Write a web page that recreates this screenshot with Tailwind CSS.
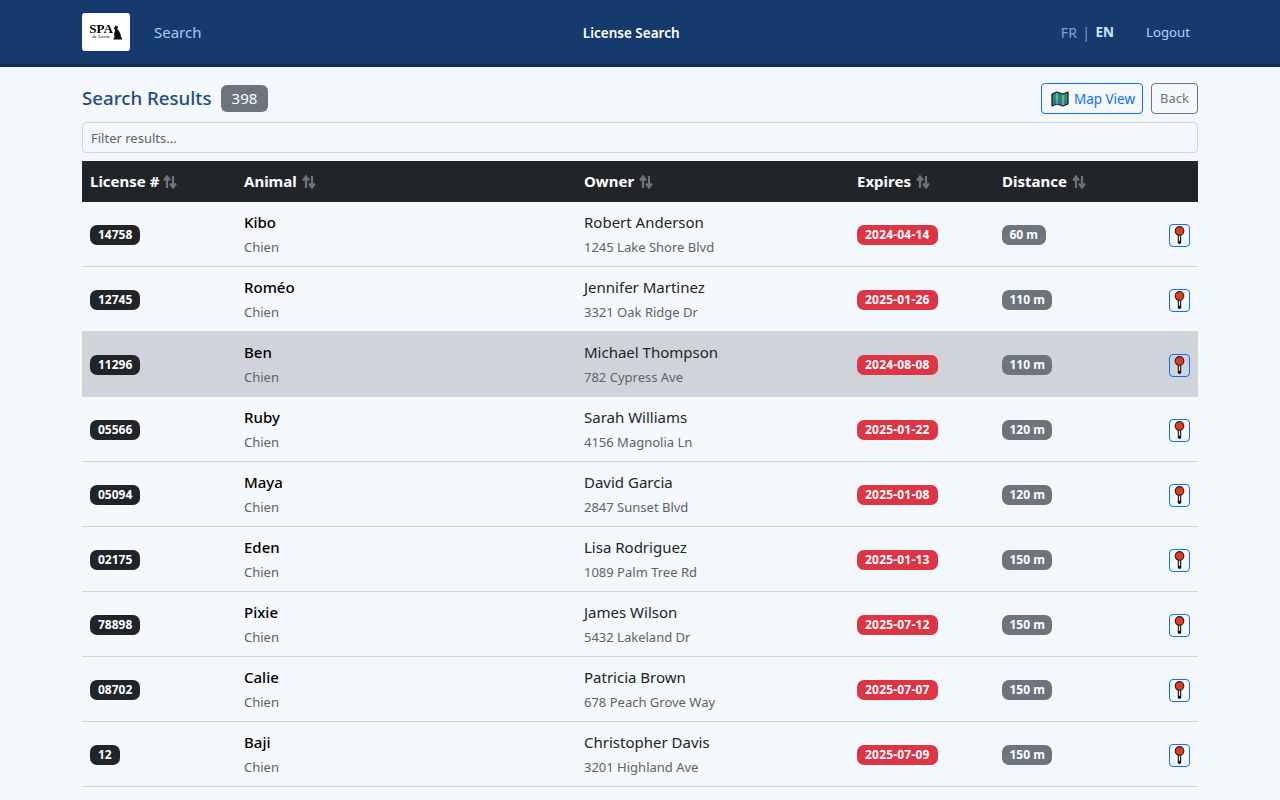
<!DOCTYPE html>
<html lang="en">
<head>
    <meta charset="UTF-8">
    <title>License Search</title>
    <script src="https://cdn.jsdelivr.net/npm/@tailwindcss/browser@4"></script>
</head>
<body class="bg-[#f4f7fc] font-['Noto_Sans',sans-serif] text-[15px] text-black overflow-hidden h-[800px]">
    <svg class="hidden">
        <symbol id="sort" viewBox="0 0 14 14">
            <path d="M4 13V3M1 5.500 4 1.500l3 4M10 1v10M7 8.500l3 4 3-4" fill="none" stroke="#6c757d" stroke-width="2.200"/>
        </symbol>
        <symbol id="pin" viewBox="0 0 12 20">
            <path d="M6 8v10" stroke="#111" stroke-width="3.800" stroke-linecap="round"/>
            <path d="M6 10v6.500" stroke="#e5e5e5" stroke-width="1.400"/>
            <circle cx="6" cy="5.500" r="4.800" fill="#e8391f" stroke="#222" stroke-width="1.200"/>
        </symbol>
    </svg>

    <!-- Top bar -->
    <header class="h-[67px] bg-[#173a6e] border-b-[3px] border-[#0f2b52] px-[82px] flex justify-between items-center">
        <div class="flex items-center gap-6">
            <div class="w-12 h-[38px] bg-white rounded-[3px] flex items-center justify-center">
                <div class="flex flex-col items-center leading-none font-['Liberation_Serif',serif] text-black">
                    <span class="text-[13px] font-bold leading-[10px]">SPA</span>
                    <span class="text-[5px] leading-[6px]">de Lavin</span>
                </div>
                <svg class="w-[10px] h-[15px]" viewBox="0 0 10 15"><path d="M2 0l1 1 1.500 0 .5 2-1 .8 2 2.200 1.500 3 .5 2.500 1.500 3H0l1.500-2.500-.5-3 1-3.500L.8 3 2 2z" fill="#111"/></svg>
            </div>
            <a class="text-[#a9cbf3] text-[15px]">Search</a>
        </div>
        <div class="text-white text-[13.500px] font-semibold pt-[3px]">License Search</div>
        <div class="flex items-center justify-end text-[14px] pr-2 pt-px">
            <span class="text-[#7fa3d1]">FR</span>
            <span class="text-[#7fa3d1] mx-[5.500px]">|</span>
            <span class="text-[#cfe2f8] font-bold text-[13.500px]">EN</span>
            <a class="text-[#b6d3f5] ml-8 text-[13.200px]">Logout</a>
        </div>
    </header>

    <main class="px-[82px]">
        <div class="flex items-center justify-between mt-4 h-[31px]">
            <div class="flex items-center gap-[9px]">
                <h1 class="text-[#1f4b85] text-[18.700px] font-medium">Search Results</h1>
                <span class="bg-[#6c757d] text-white text-[15px] rounded-md px-[11px] h-[27px] flex items-center">398</span>
            </div>
            <div class="flex items-center gap-2">
                <button class="h-[31px] pt-px border border-[#0d6efd] rounded-[4px] text-[#0d6efd] text-[13.500px] pl-[9px] pr-[7px] flex items-center gap-[5px]">
                    <svg class="w-[18px] h-[17px]" viewBox="0 0 18 17">
                        <path d="M1 3 6 1l6 2 5-2v12l-5 2-6-2-5 2z" fill="#1f7f9c" stroke="#222" stroke-width="1.300" stroke-linejoin="round"/>
                        <path d="M3 5l3-2 2 3-2 3-2-1zM10 5l4-1 1 4-2 3-2-2z" fill="#3f9a3a"/>
                        <path d="M6 2v11M12 4v10" stroke="#d9e4e8" stroke-width=".7"/>
                    </svg>
                    Map View
                </button>
                <button class="h-[31px] pt-px border border-[#6c757d] rounded-[4px] text-[#6c757d] text-[13px] px-2">Back</button>
            </div>
        </div>

        <input class="block w-full mt-2 h-[31px] px-2 bg-[#f4f7fc] border border-[#c5d8f0] rounded-[4px] text-[13px] placeholder:text-[#5c636a]" placeholder="Filter results...">

        <table class="w-full mt-2 table-fixed border-separate border-spacing-0">
            <colgroup>
                <col class="w-[154px]"><col class="w-[340px]"><col class="w-[273px]"><col class="w-[145px]"><col class="w-[153px]"><col>
            </colgroup>
            <thead>
                <tr class="bg-[#212529] h-[41px] text-white text-left text-[15px] font-bold">
                    <th class="px-2"><span class="inline-flex items-center gap-1">License # <svg class="w-[14px] h-[14px]"><use href="#sort"/></svg></span></th>
                    <th class="px-2"><span class="inline-flex items-center gap-[5px]">Animal <svg class="w-[14px] h-[14px]"><use href="#sort"/></svg></span></th>
                    <th class="px-2"><span class="inline-flex items-center gap-[5px]">Owner <svg class="w-[14px] h-[14px]"><use href="#sort"/></svg></span></th>
                    <th class="px-2"><span class="inline-flex items-center gap-[5px]">Expires <svg class="w-[14px] h-[14px]"><use href="#sort"/></svg></span></th>
                    <th class="px-2"><span class="inline-flex items-center gap-[5px]">Distance <svg class="w-[14px] h-[14px]"><use href="#sort"/></svg></span></th>
                    <th></th>
                </tr>
            </thead>
            <tbody class="[&_td]:border-b [&_td]:border-[#c5d8f0] [&_td>span]:mb-0.5">
                <tr class="h-[65px]">
                    <td class="px-2"><span class="inline-block bg-[#212529] text-white text-[12px] font-bold rounded-[7px] px-2 leading-5">14758</span></td>
                    <td class="px-2"><div class="font-medium leading-6">Kibo</div><div class="text-[#5c636a] text-[13px] leading-6 mt-px">Chien</div></td>
                    <td class="px-2"><div class="text-[#212529] leading-6">Robert Anderson</div><div class="text-[#5c636a] text-[13px] leading-6 mt-px">1245 Lake Shore Blvd</div></td>
                    <td class="px-2"><span class="inline-block bg-[#dc3545] text-white text-[12px] tracking-[0.2px] font-bold rounded-[7px] px-2 leading-5">2024-04-14</span></td>
                    <td class="px-2"><span class="inline-block bg-[#6c757d] text-white text-[12px] font-bold rounded-[7px] px-[7.500px] leading-5">60 m</span></td>
                    <td class="pr-2 text-right"><button class="inline-flex items-center justify-center w-[21px] h-[23px] mt-0.5 border border-[#0d6efd] rounded-[4px] align-middle"><svg class="w-[11px] h-[18px]"><use href="#pin"/></svg></button></td>
                </tr>
                <tr class="h-[65px]">
                    <td class="px-2"><span class="inline-block bg-[#212529] text-white text-[12px] font-bold rounded-[7px] px-2 leading-5">12745</span></td>
                    <td class="px-2"><div class="font-medium leading-6">Roméo</div><div class="text-[#5c636a] text-[13px] leading-6 mt-px">Chien</div></td>
                    <td class="px-2"><div class="text-[#212529] leading-6">Jennifer Martinez</div><div class="text-[#5c636a] text-[13px] leading-6 mt-px">3321 Oak Ridge Dr</div></td>
                    <td class="px-2"><span class="inline-block bg-[#dc3545] text-white text-[12px] tracking-[0.2px] font-bold rounded-[7px] px-2 leading-5">2025-01-26</span></td>
                    <td class="px-2"><span class="inline-block bg-[#6c757d] text-white text-[12px] font-bold rounded-[7px] px-[7.500px] leading-5">110 m</span></td>
                    <td class="pr-2 text-right"><button class="inline-flex items-center justify-center w-[21px] h-[23px] mt-0.5 border border-[#0d6efd] rounded-[4px] align-middle"><svg class="w-[11px] h-[18px]"><use href="#pin"/></svg></button></td>
                </tr>
                <tr class="h-[65px] bg-[#d0d4da]">
                    <td class="px-2"><span class="inline-block bg-[#212529] text-white text-[12px] font-bold rounded-[7px] px-2 leading-5">11296</span></td>
                    <td class="px-2"><div class="font-medium leading-6">Ben</div><div class="text-[#5c636a] text-[13px] leading-6 mt-px">Chien</div></td>
                    <td class="px-2"><div class="text-[#212529] leading-6">Michael Thompson</div><div class="text-[#5c636a] text-[13px] leading-6 mt-px">782 Cypress Ave</div></td>
                    <td class="px-2"><span class="inline-block bg-[#dc3545] text-white text-[12px] tracking-[0.2px] font-bold rounded-[7px] px-2 leading-5">2024-08-08</span></td>
                    <td class="px-2"><span class="inline-block bg-[#6c757d] text-white text-[12px] font-bold rounded-[7px] px-[7.500px] leading-5">110 m</span></td>
                    <td class="pr-2 text-right"><button class="inline-flex items-center justify-center w-[21px] h-[23px] mt-0.5 border border-[#0d6efd] rounded-[4px] align-middle"><svg class="w-[11px] h-[18px]"><use href="#pin"/></svg></button></td>
                </tr>
                <tr class="h-[65px]">
                    <td class="px-2"><span class="inline-block bg-[#212529] text-white text-[12px] font-bold rounded-[7px] px-2 leading-5">05566</span></td>
                    <td class="px-2"><div class="font-medium leading-6">Ruby</div><div class="text-[#5c636a] text-[13px] leading-6 mt-px">Chien</div></td>
                    <td class="px-2"><div class="text-[#212529] leading-6">Sarah Williams</div><div class="text-[#5c636a] text-[13px] leading-6 mt-px">4156 Magnolia Ln</div></td>
                    <td class="px-2"><span class="inline-block bg-[#dc3545] text-white text-[12px] tracking-[0.2px] font-bold rounded-[7px] px-2 leading-5">2025-01-22</span></td>
                    <td class="px-2"><span class="inline-block bg-[#6c757d] text-white text-[12px] font-bold rounded-[7px] px-[7.500px] leading-5">120 m</span></td>
                    <td class="pr-2 text-right"><button class="inline-flex items-center justify-center w-[21px] h-[23px] mt-0.5 border border-[#0d6efd] rounded-[4px] align-middle"><svg class="w-[11px] h-[18px]"><use href="#pin"/></svg></button></td>
                </tr>
                <tr class="h-[65px]">
                    <td class="px-2"><span class="inline-block bg-[#212529] text-white text-[12px] font-bold rounded-[7px] px-2 leading-5">05094</span></td>
                    <td class="px-2"><div class="font-medium leading-6">Maya</div><div class="text-[#5c636a] text-[13px] leading-6 mt-px">Chien</div></td>
                    <td class="px-2"><div class="text-[#212529] leading-6">David Garcia</div><div class="text-[#5c636a] text-[13px] leading-6 mt-px">2847 Sunset Blvd</div></td>
                    <td class="px-2"><span class="inline-block bg-[#dc3545] text-white text-[12px] tracking-[0.2px] font-bold rounded-[7px] px-2 leading-5">2025-01-08</span></td>
                    <td class="px-2"><span class="inline-block bg-[#6c757d] text-white text-[12px] font-bold rounded-[7px] px-[7.500px] leading-5">120 m</span></td>
                    <td class="pr-2 text-right"><button class="inline-flex items-center justify-center w-[21px] h-[23px] mt-0.5 border border-[#0d6efd] rounded-[4px] align-middle"><svg class="w-[11px] h-[18px]"><use href="#pin"/></svg></button></td>
                </tr>
                <tr class="h-[65px]">
                    <td class="px-2"><span class="inline-block bg-[#212529] text-white text-[12px] font-bold rounded-[7px] px-2 leading-5">02175</span></td>
                    <td class="px-2"><div class="font-medium leading-6">Eden</div><div class="text-[#5c636a] text-[13px] leading-6 mt-px">Chien</div></td>
                    <td class="px-2"><div class="text-[#212529] leading-6">Lisa Rodriguez</div><div class="text-[#5c636a] text-[13px] leading-6 mt-px">1089 Palm Tree Rd</div></td>
                    <td class="px-2"><span class="inline-block bg-[#dc3545] text-white text-[12px] tracking-[0.2px] font-bold rounded-[7px] px-2 leading-5">2025-01-13</span></td>
                    <td class="px-2"><span class="inline-block bg-[#6c757d] text-white text-[12px] font-bold rounded-[7px] px-[7.500px] leading-5">150 m</span></td>
                    <td class="pr-2 text-right"><button class="inline-flex items-center justify-center w-[21px] h-[23px] mt-0.5 border border-[#0d6efd] rounded-[4px] align-middle"><svg class="w-[11px] h-[18px]"><use href="#pin"/></svg></button></td>
                </tr>
                <tr class="h-[65px]">
                    <td class="px-2"><span class="inline-block bg-[#212529] text-white text-[12px] font-bold rounded-[7px] px-2 leading-5">78898</span></td>
                    <td class="px-2"><div class="font-medium leading-6">Pixie</div><div class="text-[#5c636a] text-[13px] leading-6 mt-px">Chien</div></td>
                    <td class="px-2"><div class="text-[#212529] leading-6">James Wilson</div><div class="text-[#5c636a] text-[13px] leading-6 mt-px">5432 Lakeland Dr</div></td>
                    <td class="px-2"><span class="inline-block bg-[#dc3545] text-white text-[12px] tracking-[0.2px] font-bold rounded-[7px] px-2 leading-5">2025-07-12</span></td>
                    <td class="px-2"><span class="inline-block bg-[#6c757d] text-white text-[12px] font-bold rounded-[7px] px-[7.500px] leading-5">150 m</span></td>
                    <td class="pr-2 text-right"><button class="inline-flex items-center justify-center w-[21px] h-[23px] mt-0.5 border border-[#0d6efd] rounded-[4px] align-middle"><svg class="w-[11px] h-[18px]"><use href="#pin"/></svg></button></td>
                </tr>
                <tr class="h-[65px]">
                    <td class="px-2"><span class="inline-block bg-[#212529] text-white text-[12px] font-bold rounded-[7px] px-2 leading-5">08702</span></td>
                    <td class="px-2"><div class="font-medium leading-6">Calie</div><div class="text-[#5c636a] text-[13px] leading-6 mt-px">Chien</div></td>
                    <td class="px-2"><div class="text-[#212529] leading-6">Patricia Brown</div><div class="text-[#5c636a] text-[13px] leading-6 mt-px">678 Peach Grove Way</div></td>
                    <td class="px-2"><span class="inline-block bg-[#dc3545] text-white text-[12px] tracking-[0.2px] font-bold rounded-[7px] px-2 leading-5">2025-07-07</span></td>
                    <td class="px-2"><span class="inline-block bg-[#6c757d] text-white text-[12px] font-bold rounded-[7px] px-[7.500px] leading-5">150 m</span></td>
                    <td class="pr-2 text-right"><button class="inline-flex items-center justify-center w-[21px] h-[23px] mt-0.5 border border-[#0d6efd] rounded-[4px] align-middle"><svg class="w-[11px] h-[18px]"><use href="#pin"/></svg></button></td>
                </tr>
                <tr class="h-[65px]">
                    <td class="px-2"><span class="inline-block bg-[#212529] text-white text-[12px] font-bold rounded-[7px] px-2 leading-5">12</span></td>
                    <td class="px-2"><div class="font-medium leading-6">Baji</div><div class="text-[#5c636a] text-[13px] leading-6 mt-px">Chien</div></td>
                    <td class="px-2"><div class="text-[#212529] leading-6">Christopher Davis</div><div class="text-[#5c636a] text-[13px] leading-6 mt-px">3201 Highland Ave</div></td>
                    <td class="px-2"><span class="inline-block bg-[#dc3545] text-white text-[12px] tracking-[0.2px] font-bold rounded-[7px] px-2 leading-5">2025-07-09</span></td>
                    <td class="px-2"><span class="inline-block bg-[#6c757d] text-white text-[12px] font-bold rounded-[7px] px-[7.500px] leading-5">150 m</span></td>
                    <td class="pr-2 text-right"><button class="inline-flex items-center justify-center w-[21px] h-[23px] mt-0.5 border border-[#0d6efd] rounded-[4px] align-middle"><svg class="w-[11px] h-[18px]"><use href="#pin"/></svg></button></td>
                </tr>
            </tbody>
        </table>
    </main>
</body>
</html>
